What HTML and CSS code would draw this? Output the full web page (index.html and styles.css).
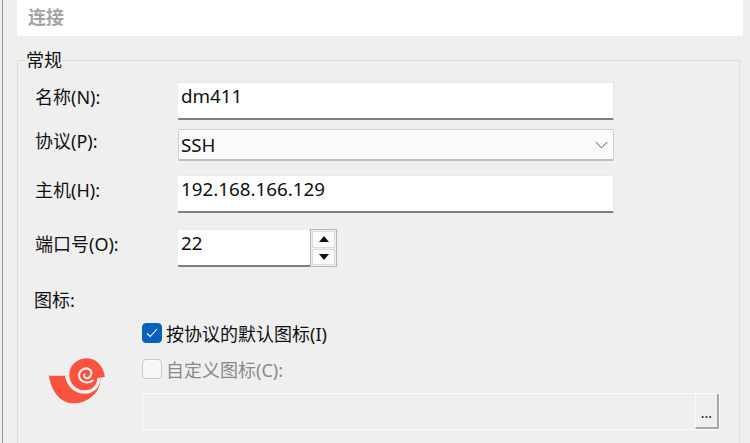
FILE: index.html
```html
<!DOCTYPE html>
<html lang="zh">
<head>
<meta charset="utf-8">
<title>连接</title>
<link rel="stylesheet" href="styles.css">
</head>
<body>
<div class="app">
  <div class="rail"></div>
  <main class="panel">
    <header class="head">连接</header>
    <fieldset class="group">
      <legend class="legend">常规</legend>
      <div class="form">
        <div class="label">名称(N):</div>
        <div class="input wide">dm411</div>
        <div class="label combo-label">协议(P):</div>
        <div class="combo wide"><span>SSH</span>
          <svg class="chevron" width="13" height="8" viewBox="0 0 13 8"><path d="M.7 1l5.8 5.8L12.3 1" fill="none" stroke="#555" stroke-width="1"/></svg>
        </div>
        <div class="label">主机(H):</div>
        <div class="input wide">192.168.166.129</div>
        <div class="label">端口号(O):</div>
        <div class="spin">
          <div class="input short">22</div>
          <div class="spin-btns">
            <div class="spin-btn"><svg width="10" height="6" viewBox="0 0 10 6"><path d="M5 0l5 6H0z" fill="#111"/></svg></div>
            <div class="spin-btn"><svg width="10" height="6" viewBox="0 0 10 6"><path d="M0 0h10L5 6z" fill="#111"/></svg></div>
          </div>
        </div>
      </div>
      <div class="icon-title">图标:</div>
      <div class="icon-area">
        <svg class="snail" width="90" height="70" viewBox="0 0 270 210">
          <path d="M57 77H118C116 48 140 25 172 25C200 25 220 50 225 80L211 83C214 125 175 160 130 160C90 160 62 120 57 77Z" fill="#fa5440"/>
          <path d="M105 77C110 110 135 131 165 131C192 131 212 110 211 83L202 84C202 105 186 121 165 121C140 121 120 103 118 77Z" fill="#efefef"/>
          <path d="M190 90C178 101 155 100 148 82C143 62 165 50 178 58C190 66 182 88 168 84C160 82 160 74 166 72" fill="none" stroke="#efefef" stroke-width="6"/>
        </svg>
        <div class="icon-options">
          <div class="option">
            <span class="check checked"><svg width="12" height="10" viewBox="0 0 12 10"><path d="M1 5.5l3.2 3L11 1" fill="none" stroke="#fff" stroke-width="1.1"/></svg></span>
            <span>按协议的默认图标(I)</span>
          </div>
          <div class="option disabled">
            <span class="check"></span>
            <span>自定义图标(C):</span>
          </div>
          <div class="path-row">
            <div class="path-input"></div>
            <div class="path-btn">...</div>
          </div>
        </div>
      </div>
    </fieldset>
  </main>
</div>
</body>
</html>
```
FILE: styles.css
```css
html, body {
  margin: 0;
  height: 443px;
  overflow: hidden;
}
body {
  background: #efefef;
  color: #111;
  font-family: "Noto Sans", "Noto Sans CJK SC", sans-serif;
  font-size: 18px;
}
.app {
  display: flex;
  height: 443px;
  overflow: hidden;
}
.rail {
  width: 1px;
  margin-left: 2px;
  background: #8f939b;
  flex: none;
}
.panel {
  margin-left: 14px;
  width: 726px;
  flex: none;
}
.head {
  height: 36px;
  line-height: 35px;
  background: #fff;
  color: #a3a3a3;
  font-size: 18px;
  font-weight: 700;
  padding-left: 11px;
  box-sizing: border-box;
}
.group {
  margin: 14px 3px 0 0;
  padding: 0 0 0 17px;
  border: 1px solid #dcdcdc;
  min-width: 0;
  height: 500px;
}
.legend {
  margin-left: -9px;
  padding: 0;
  line-height: 20px;
  width: 36px;
  height: 20px;
  background: #efefef;
}
.form {
  display: grid;
  grid-template-columns: 143px 436px;
  grid-template-rows: 47px 46px 54px 38px;
  margin-top: 12px;
}
.label {
  line-height: 30px;
  white-space: nowrap;
}
.combo-label {
  margin-top: -3px;
}
.input {
  box-sizing: border-box;
  height: 38px;
  background: #fff;
  border-top: 1px solid #e9e9e9;
  border-right: 1px solid #e6e6e6;
  border-bottom: 2px solid #808080;
  border-radius: 1px;
  padding-left: 3px;
  font-size: 18.8px;
  line-height: 26px;
}
.combo {
  box-sizing: border-box;
  height: 32px;
  display: flex;
  align-items: center;
  justify-content: space-between;
  background: #fbfbfb;
  border: 1px solid #d0d0d0;
  border-bottom: 2px solid #bdbdbd;
  border-radius: 2px;
  padding: 0 5px 0 2px;
  font-size: 18.8px;
  line-height: 30px;
}
.spin {
  display: flex;
  width: 159px;
  height: 38px;
}
.short {
  width: 132px;
  flex: none;
  border-right: 0;
}
.spin-btns {
  width: 27px;
  box-sizing: border-box;
  height: 38px;
  border: 1px solid #b5b5b5;
  padding: 1px;
  display: flex;
  flex-direction: column;
  gap: 1px;
}
.spin-btn {
  flex: 1;
  box-sizing: border-box;
  background: #fbfbfb;
  border: 1px solid #dcdcdc;
  display: flex;
  align-items: center;
  justify-content: center;
}
.icon-title {
  margin: 21px 0 0 -1px;
  line-height: 24px;
}
.icon-area {
  display: flex;
  margin-left: -5px;
}
.snail {
  flex: none;
  margin-top: 38px;
}
.icon-options {
  margin-left: 22px;
  margin-top: 11px;
  width: 578px;
}
.option {
  display: flex;
  align-items: center;
  gap: 4px;
  height: 20px;
  margin-bottom: 16px;
  white-space: nowrap;
}
.option.disabled {
  color: #8a8a8a;
}
.check {
  box-sizing: border-box;
  width: 20px;
  height: 20px;
  border-radius: 4px;
  background: #f8f8f8;
  border: 1px solid #c6c6c6;
  display: flex;
  align-items: center;
  justify-content: center;
  flex: none;
}
.check.checked {
  background: #0660bf;
  border-color: #0660bf;
}
.path-row {
  display: flex;
  box-sizing: border-box;
  margin-top: -2px;
  height: 37px;
  border: 1px solid #fafafa;
}
.path-input {
  flex: 1;
}
.path-btn {
  box-sizing: border-box;
  width: 24px;
  border-left: 1px solid #fafafa;
  border-right: 2px solid #a8a8a8;
  border-bottom: 2px solid #a8a8a8;
  font-size: 14px;
  line-height: 38px;
  text-align: center;
}
```
